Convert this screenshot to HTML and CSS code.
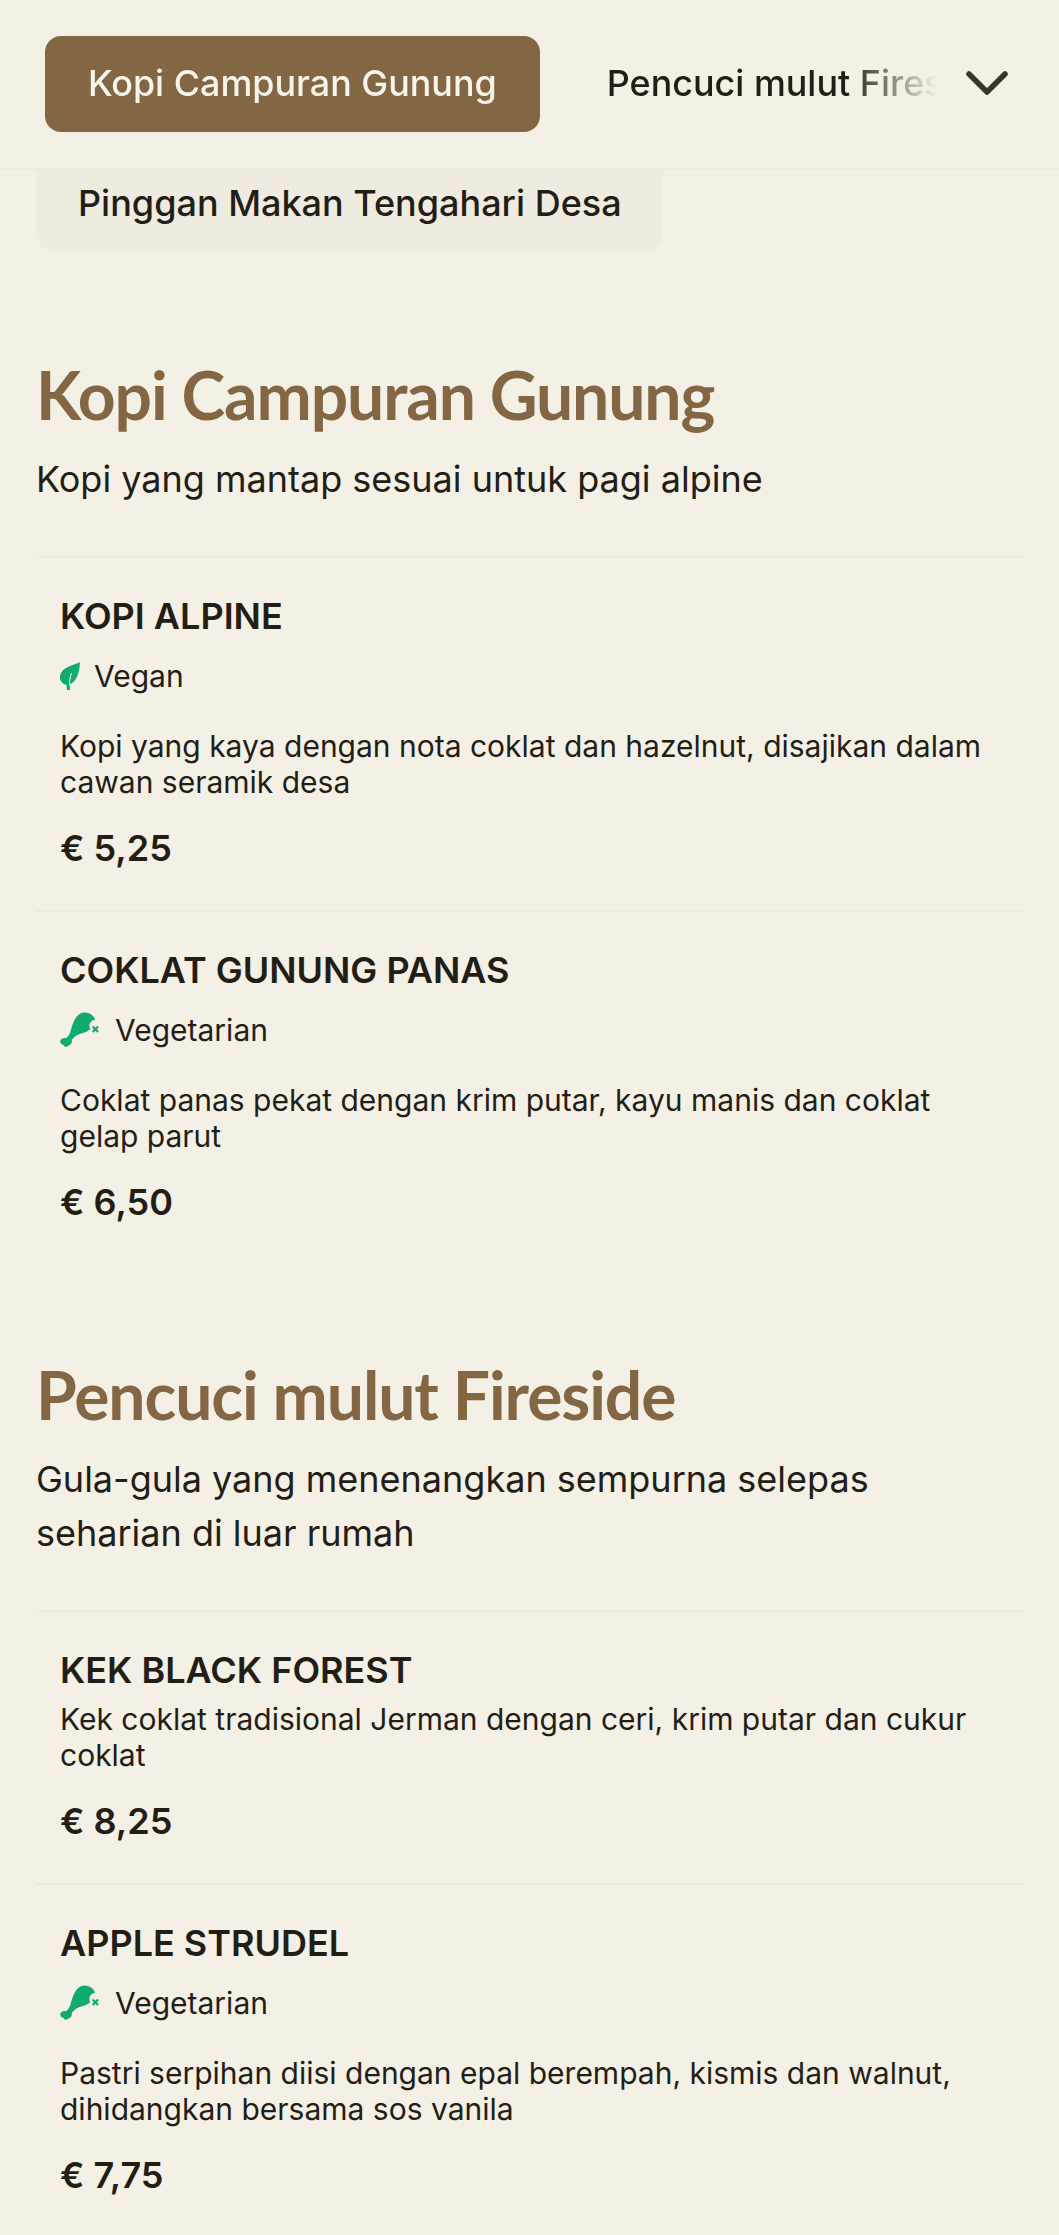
FILE: index.html
```html
<!DOCTYPE html>
<html lang="ms">
<head>
<meta charset="utf-8">
<title>Menu</title>
<link rel="stylesheet" href="styles.css">
</head>
<body>
<svg class="defs" width="0" height="0" aria-hidden="true">
  <symbol id="leaf" viewBox="0 0 20 28">
    <path d="M20 0C18 1.500 11 3 6 6 1.500 8.500 0 12 0 15.500c0 3.500 2 6 6.500 7.500l.5 5h3l-.4-5.500C16 20 19.500 12 20 0z"/>
    <path class="vein" d="M9.500 23C9.400 19 10 15 11.500 11"/>
  </symbol>
  <symbol id="drum" viewBox="0 0 42 36">
    <path d="M25 0C30 0 34.500 3 36 7.500 32 8 30 11 30 14c0 1 .5 2 1 3-3.500 3.500-9 4.500-12 5.500-3 1-5 3-7 5.500.5 2.500-.5 5-3 6-2.500 2-5 1-5.500-1C1 33-.3 30.500.5 28.500c1-2 3.500-3 5.500-2 2-1.500 3.500-3.500 4.500-6.500C12 14 14 9 16.500 5c2-3 5.500-5 8.500-5z"/>
    <path class="cross" d="M33.500 14.500l5.500 5.500m0-5.500L33.500 20"/>
  </symbol>
</svg>

<header class="topbar">
  <nav class="tabs">
    <a class="tab tab-active">Kopi Campuran Gunung</a>
    <a class="tab">Pencuci mulut Fireside</a>
  </nav>
  <button class="more" aria-label="Lagi">
    <svg class="chev" viewBox="0 0 42 26"><path d="M3 3l18 18L39 3"/></svg>
  </button>
</header>

<main class="page">
  <div class="pill">Pinggan Makan Tengahari Desa</div>

  <section class="section">
    <h2 class="section-title">Kopi Campuran Gunung</h2>
    <p class="section-sub">Kopi yang mantap sesuai untuk pagi alpine</p>
    <article class="item">
      <h3 class="item-name">KOPI ALPINE</h3>
      <div class="tag"><svg class="ico-leaf"><use href="#leaf"/></svg><span>Vegan</span></div>
      <p class="item-desc">Kopi yang kaya dengan nota coklat dan hazelnut, disajikan dalam cawan seramik desa</p>
      <div class="price">€ 5,25</div>
    </article>
    <article class="item">
      <h3 class="item-name">COKLAT GUNUNG PANAS</h3>
      <div class="tag"><svg class="ico-drum"><use href="#drum"/></svg><span>Vegetarian</span></div>
      <p class="item-desc">Coklat panas pekat dengan krim putar, kayu manis dan coklat gelap parut</p>
      <div class="price">€ 6,50</div>
    </article>
  </section>

  <section class="section section-next">
    <h2 class="section-title">Pencuci mulut Fireside</h2>
    <p class="section-sub">Gula-gula yang menenangkan sempurna selepas seharian di luar rumah</p>
    <article class="item">
      <h3 class="item-name item-name-tight">KEK BLACK FOREST</h3>
      <p class="item-desc">Kek coklat tradisional Jerman dengan ceri, krim putar dan cukur coklat</p>
      <div class="price">€ 8,25</div>
    </article>
    <article class="item">
      <h3 class="item-name">APPLE STRUDEL</h3>
      <div class="tag"><svg class="ico-drum"><use href="#drum"/></svg><span>Vegetarian</span></div>
      <p class="item-desc">Pastri serpihan diisi dengan epal berempah, kismis dan walnut, dihidangkan bersama sos vanila</p>
      <div class="price">€ 7,75</div>
    </article>
  </section>
</main>
</body>
</html>
```
FILE: styles.css
```css
* { box-sizing: border-box; }
html, body { margin: 0; padding: 0; height: 2235px; overflow: hidden; }
body { background: #f5f0e6; color: #231e15; font-family: Inter, "Liberation Sans", sans-serif; }
.defs { position: absolute; }
.topbar { height: 170px; display: flex; align-items: flex-start; padding: 36px 0 0 45px; border-bottom: 2px solid #efeadf; }
.tabs { width: 900px; display: flex; gap: 67px; overflow: hidden; white-space: nowrap; -webkit-mask-image: linear-gradient(to right, #000 802px, transparent 892px); mask-image: linear-gradient(to right, #000 802px, transparent 892px); }
.tab { flex: none; font-size: 35.900px; font-weight: 500; line-height: 94px; height: 96px; }
.tab-active { background: #836744; color: #f8f4ea; padding: 0 43px; border-radius: 16px; }
.more { flex: none; border: 0; background: none; padding: 0; margin: 35px 0 0 21px; width: 42px; height: 26px; display: block; }
.chev { display: block; width: 42px; height: 26px; fill: none; stroke: #3a3529; stroke-width: 5.500; stroke-linecap: round; stroke-linejoin: round; }
.page { padding: 0 36px; }
.pill { width: 627px; height: 82px; background: #efebe1; border-radius: 0 0 20px 20px; font-size: 36px; font-weight: 500; line-height: 66px; padding: 0 42px; white-space: nowrap; }
.section { padding-top: 101px; }
.section-next { padding-top: 89px; }
.section-title { margin: 0; font-family: Lato, sans-serif; font-weight: 700; font-size: 66px; letter-spacing: -1.100px; line-height: 84px; color: #836744; }
.section-sub { margin: 15px 0 50px; max-width: 900px; font-size: 36px; line-height: 54px; }
.item { border-top: 2px solid #efeadf; padding: 37px 24px 41px; }
.item-name { margin: 0 0 21px; font-size: 36px; font-weight: 600; line-height: 42px; }
.item-name-tight { margin-bottom: 10px; }
.tag { display: flex; align-items: center; gap: 14px; height: 36px; font-size: 30px; margin-bottom: 34px; }
.ico-leaf { width: 20px; height: 28px; fill: #10ab6e; }
.ico-drum { width: 41px; height: 36px; fill: #10ab6e; }
.vein { fill: none; stroke: #f5f0e6; stroke-width: 1.000; }
.cross { fill: none; stroke: #10ab6e; stroke-width: 2.200; }
.item-desc { margin: 0 0 27px; font-size: 30px; line-height: 36px; }
.price { font-size: 36px; font-weight: 600; line-height: 42px; }
```
